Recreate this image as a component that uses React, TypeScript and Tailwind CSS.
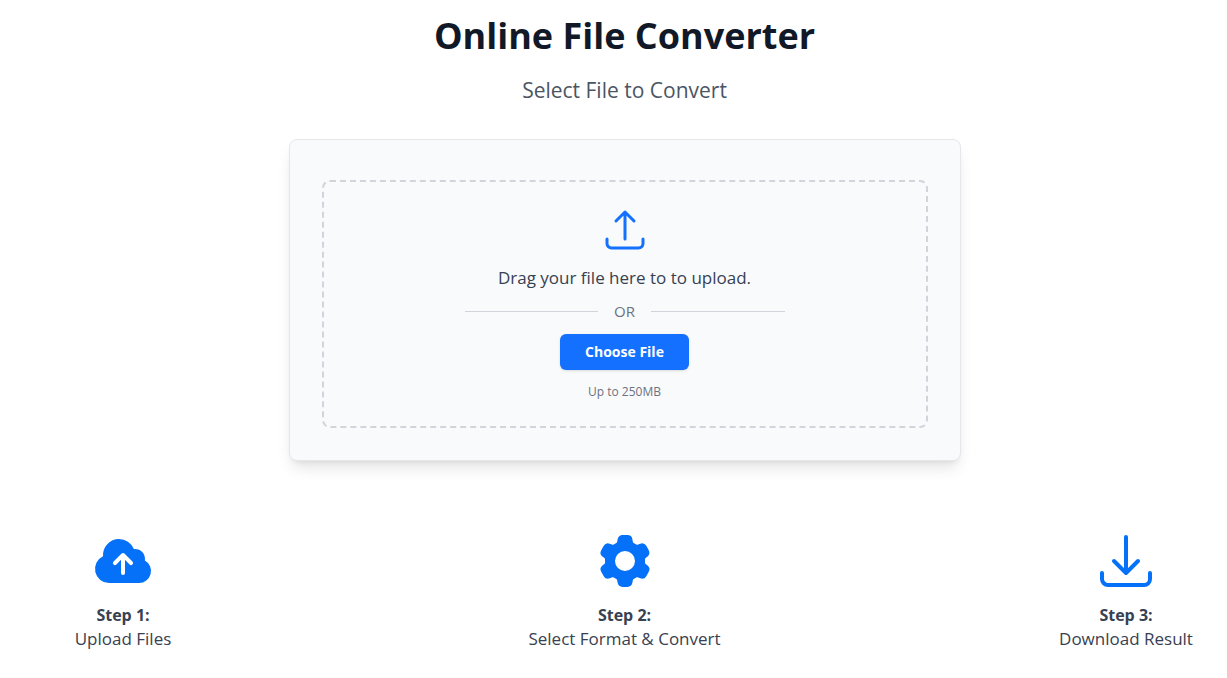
import React, { useRef, useState } from 'react';
import type { IconType } from 'react-icons';
import {
  HiCloudArrowUp,
  HiCog6Tooth,
  HiOutlineArrowDownTray,
  HiOutlineArrowUpTray,
} from 'react-icons/hi2';

interface Step {
  title: string;
  text: string;
  icon: IconType;
}

const STEPS: Step[] = [
  { title: 'Step 1:', text: 'Upload Files', icon: HiCloudArrowUp },
  { title: 'Step 2:', text: 'Select Format & Convert', icon: HiCog6Tooth },
  { title: 'Step 3:', text: 'Download Result', icon: HiOutlineArrowDownTray },
];

const DropZone: React.FC = () => {
  const inputRef = useRef<HTMLInputElement>(null);
  const [fileName, setFileName] = useState('');

  const handleDrop = (e: React.DragEvent) => {
    e.preventDefault();
    setFileName(e.dataTransfer.files[0]?.name ?? '');
  };

  return (
    <div
      onDragOver={(e) => e.preventDefault()}
      onDrop={handleDrop}
      className="mt-2 flex flex-col items-center rounded-lg border-2 border-dashed border-[#d1d5db] p-6"
    >
      <HiOutlineArrowUpTray className="size-12 text-[#1470ff]" aria-hidden="true" />
      <p className="mt-2.5 text-[17px] leading-7 text-[#374151]">
        {fileName || 'Drag your file here to to upload.'}
      </p>

      {/* Divider */}
      <div className="mt-[7px] flex w-full max-w-xs items-center gap-4">
        <span className="h-px flex-1 bg-[#d1d5db]" />
        <span className="text-[15px] leading-6 text-[#6b7280]">OR</span>
        <span className="h-px flex-1 bg-[#d1d5db]" />
      </div>

      <input
        ref={inputRef}
        type="file"
        aria-label="File to convert"
        className="hidden"
        onChange={(e) => setFileName(e.target.files?.[0]?.name ?? '')}
      />
      <button
        type="button"
        onClick={() => inputRef.current?.click()}
        className="mt-[11px] cursor-pointer rounded-md bg-[#1470ff] px-[25px] py-2 text-sm font-bold text-white shadow-sm"
      >
        Choose File
      </button>
      <p className="mt-3 text-xs leading-5 text-[#6b7280]">Up to 250MB</p>
    </div>
  );
};

export default function App() {
  return (
    <main className="min-h-screen bg-white pt-3 pr-[5px] pb-6 pl-[27px] font-['Open_Sans','Noto_Sans',sans-serif]">
      <header className="text-center">
        <h1 className="text-4xl leading-12 font-bold text-[#111827]">Online File Converter</h1>
        <p className="mt-4 text-[21px] leading-7 text-[#4b5563]">Select File to Convert</p>
      </header>

      {/* Upload card */}
      <section className="mx-auto mt-[35px] max-w-2xl rounded-lg border border-[#e5e7eb] bg-[#f9fafc] p-8 shadow-lg">
        <DropZone />
      </section>

      {/* Steps */}
      <section className="mt-17 flex flex-wrap justify-between gap-y-8">
        {STEPS.map(({ title, text, icon: Icon }) => (
          <div key={title} className="flex w-48 flex-col items-center text-center text-[#374151]">
            <Icon className="size-16 text-[#0570f8]" aria-hidden="true" />
            <h2 className="mt-2.5 text-base leading-6 font-bold">{title}</h2>
            <p className="text-[17px] leading-6 whitespace-nowrap">{text}</p>
          </div>
        ))}
      </section>
    </main>
  );
}
